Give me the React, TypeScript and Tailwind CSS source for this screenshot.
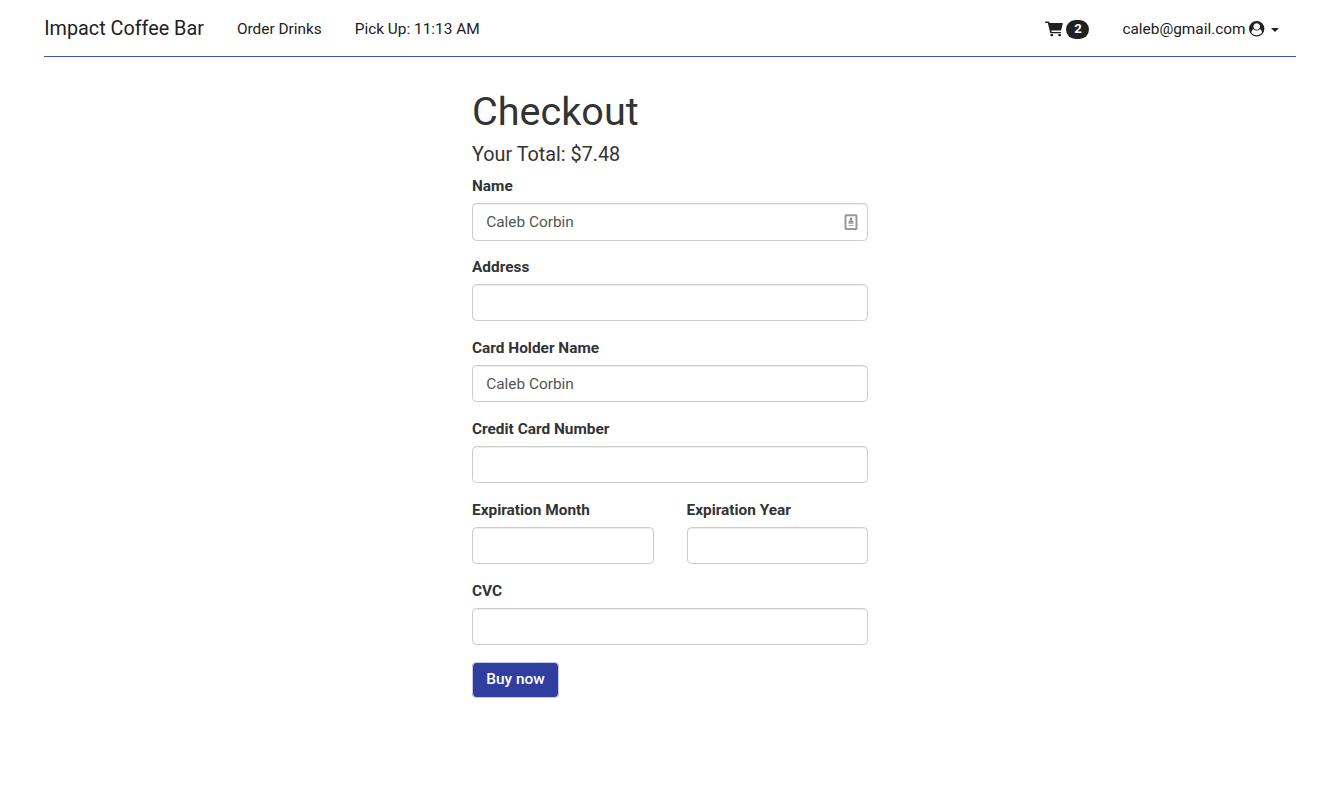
import type { ReactNode } from "react";

function CartIcon() {
  return (
    <svg viewBox="0 0 18 16" className="mb-px h-4 w-[18px]" fill="currentColor">
      <path d="M0.700 0.500H3.600Q4.100 0.500 4.250 1L4.600 2H17.300Q17.900 2 17.800 2.600L16.200 8.900Q16 9.600 15.400 9.600H6.300L6.700 10.900H15.500Q16.200 10.900 16.200 11.600T15.500 12.300H5.900Q5.400 12.300 5.200 11.800L2.800 1.900H0.700Q0 1.900 0 1.200T0.700 0.500Z" />
      <rect x="5.400" y="13" width="2.700" height="2.300" rx="0.800" />
      <rect x="13.300" y="13" width="2.700" height="2.300" rx="0.800" />
    </svg>
  );
}

function UserIcon() {
  return (
    <svg viewBox="0 0 1792 1792" className="size-[15.400px]" fill="currentColor">
      <path
        fillRule="evenodd"
        d="M1523 1339q-22-155-87.500-257.500t-184.500-118.500q-67 74-159.500 115.500t-195.500 41.500-195.500-41.500-159.500-115.500q-119 16-184.500 118.500t-87.500 257.500q106 150 271 237.500t356 87.500 356-87.500 271-237.500zM1280 640q0-159-112.500-271.500t-271.500-112.500-271.500 112.500-112.500 271.500 112.500 271.500 271.500 112.500 271.500-112.500 112.500-271.500zM1792 896A896 896 0 1 1 0 896A896 896 0 1 1 1792 896z"
      />
    </svg>
  );
}

function ContactIcon() {
  return (
    <svg viewBox="0 0 14 16" className="mb-px h-4 w-[14px]" fill="none">
      <rect x="1.500" y="1.300" width="11" height="13.600" rx="0.600" stroke="#999" strokeWidth="2" />
      <circle cx="7" cy="4.900" r="1.300" fill="#8b8b8b" />
      <path d="M4.600 8.700V7.800Q4.600 6.300 7 6.300T9.400 7.800V8.700Z" fill="#8b8b8b" />
      <path d="M4.500 9.500h5M4.500 11.500h5" stroke="#b0b0b0" />
    </svg>
  );
}

type FieldProps = { label: string; id: string; value?: string; icon?: ReactNode };

function Field({ label, id, value, icon }: FieldProps) {
  return (
    <div className="h-[81px]">
      <label htmlFor={id} className="mb-[6.500px] block h-[22px] leading-[22px] font-bold">
        {label}
      </label>
      <div
        className={`flex items-center rounded-[4.400px] border border-[#ccc] bg-white pr-[9px] pl-[13.200px] text-[#555] shadow-[inset_0_1px_1px_rgba(0,0,0,0.075)] ${icon ? "h-[38px]" : "h-[37px]"}`}
      >
        <input id={id} defaultValue={value} className="h-[35px] min-w-0 flex-1 self-start bg-transparent outline-none" />
        {icon}
      </div>
    </div>
  );
}

export default function App() {
  return (
    <div className="min-h-screen bg-white font-[Roboto,sans-serif] text-[15.400px] leading-[22px] text-[#333]">
      <nav className="mr-[30px] ml-[43.500px] flex h-[57px] items-center border-b border-[#3f51b5] pt-[2px] text-[#212121]">
        <a className="ml-[0.700px] text-[19.800px]">Impact Coffee Bar</a>
        <a className="ml-[33px]">Order Drinks</a>
        <a className="ml-[33px]">Pick Up: 11:13 AM</a>
        <div className="ml-auto flex items-center gap-[3px]">
          <CartIcon />
          <span className="flex h-[19px] w-[23px] items-center justify-center rounded-full bg-[#212121] text-[13.200px] leading-none font-bold text-white">
            2
          </span>
        </div>
        <div className="mr-[17px] ml-[33px] flex items-center">
          <span>caleb@gmail.com</span>
          <span className="ml-[3.500px]">
            <UserIcon />
          </span>
          <span className="mt-px ml-[6.500px] h-0 w-0 border-x-4 border-t-4 border-x-transparent border-t-[#212121]" />
        </div>
      </nav>
      <main className="ml-[472px] w-[396px] pt-[33px]">
        <h1 className="mb-[10px] text-[39.600px] leading-[43.560px] font-normal">Checkout</h1>
        <h4 className="mb-[9px] text-[19.800px] leading-[22px]">Your Total: $7.48</h4>
        <form>
          <Field id="name" label="Name" value="Caleb Corbin" icon={<ContactIcon />} />
          <Field id="address" label="Address" />
          <Field id="holder" label="Card Holder Name" value="Caleb Corbin" />
          <Field id="number" label="Credit Card Number" />
          <div className="grid grid-cols-2 gap-[33px]">
            <Field id="month" label="Expiration Month" />
            <Field id="year" label="Expiration Year" />
          </div>
          <Field id="cvc" label="CVC" />
          <button
            type="button"
            className="mt-px flex h-[36px] w-[87px] items-center justify-center rounded-[4.400px] border border-[#c5cae9] bg-[#303f9f] pb-[2px] font-medium text-white"
          >
            Buy now
          </button>
        </form>
      </main>
    </div>
  );
}
